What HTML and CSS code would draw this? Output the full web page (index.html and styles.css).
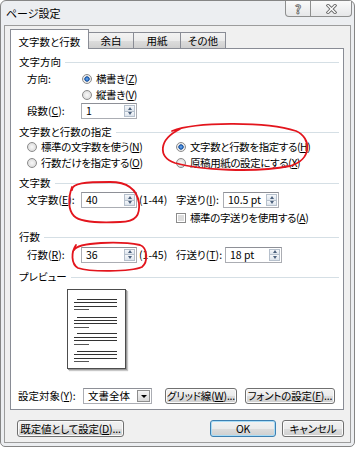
FILE: index.html
```html
<!DOCTYPE html>
<html lang="ja">
<head>
<meta charset="utf-8">
<title>ページ設定</title>
<link rel="stylesheet" href="styles.css">
</head>
<body>
<div class="window">
  <div class="titlebar">
    <span class="title">ページ設定</span>
    <div class="caps">
      <span class="cap help">?</span>
      <span class="cap close"><svg width="11" height="10" viewBox="0 0 11 10"><path d="M2 1.5 L9 8.5 M9 1.5 L2 8.5" stroke="#6b6b6b" stroke-width="3.2" stroke-linecap="square"/><path d="M2 1.5 L9 8.5 M9 1.5 L2 8.5" stroke="#ffffff" stroke-width="1.4" stroke-linecap="square"/></svg></span>
    </div>
  </div>
  <div class="client">
    <div class="tabs">
      <div class="tab active t1">文字数と行数</div>
      <div class="tab t2">余白</div>
      <div class="tab t3">用紙</div>
      <div class="tab t4">その他</div>
    </div>
    <div class="panel">
      <div class="grp g1">文字方向</div>
      <div class="row r-dir1"><span class="lbl l-dir">方向:</span><span class="radio on"></span><span class="rt">横書き(<u>Z</u>)</span></div>
      <div class="row r-dir2"><span class="radio"></span><span class="rt">縦書き(<u>V</u>)</span></div>
      <div class="row r-cols"><span class="lbl l54">段数(<u>C</u>):</span><span class="spin w56"><span class="val">1</span><span class="arrows"><span class="up"></span><span class="dn"></span></span></span></div>

      <div class="grp g2">文字数と行数の指定</div>
      <div class="row two r-opt">
        <div class="cell"><span class="radio"></span><span class="rt">標準の文字数を使う(<u>N</u>)</span></div>
        <div class="cell"><span class="radio on"></span><span class="rt">文字数と行数を指定する(<u>H</u>)</span></div>
      </div>
      <div class="row two r-opt">
        <div class="cell"><span class="radio"></span><span class="rt">行数だけを指定する(<u>O</u>)</span></div>
        <div class="cell"><span class="radio"></span><span class="rt">原稿用紙の設定にする(<u>X</u>)</span></div>
      </div>

      <div class="grp g3">文字数</div>
      <div class="row two r-chars">
        <div class="cell"><span class="lbl l54">文字数(<u>E</u>):</span><span class="spin w56"><span class="val">40</span><span class="arrows"><span class="up"></span><span class="dn"></span></span></span><span class="range">(1-44)</span></div>
        <div class="cell"><span class="lbl l47">字送り(<u>I</u>):</span><span class="spin w56"><span class="val">10.5 pt</span><span class="arrows"><span class="up"></span><span class="dn"></span></span></span></div>
      </div>
      <div class="row two r-check">
        <div class="cell"></div>
        <div class="cell"><span class="check"></span><span class="rt">標準の字送りを使用する(<u>A</u>)</span></div>
      </div>

      <div class="grp g4">行数</div>
      <div class="row two r-lines">
        <div class="cell"><span class="lbl l54">行数(<u>R</u>):</span><span class="spin w56"><span class="val">36</span><span class="arrows"><span class="up"></span><span class="dn"></span></span></span><span class="range">(1-45)</span></div>
        <div class="cell"><span class="lbl l49">行送り(<u>T</u>):</span><span class="spin w57"><span class="val">18 pt</span><span class="arrows"><span class="up"></span><span class="dn"></span></span></span></div>
      </div>

      <div class="grp g5">プレビュー</div>
      <div class="preview">
        <svg width="57" height="78" viewBox="0 0 57 78">
          <g stroke-width="1">
            <path d="M9 9.5H49M6 12.5H49M6 16.5H49" stroke="#333"/><path d="M6 19.5H21" stroke="#555"/>
            <path d="M9 27.5H49M6 30.5H49M6 33.5H49" stroke="#333"/><path d="M6 37.5H21" stroke="#555"/>
            <path d="M9 43.5H49M6 47.5H49M6 50.5H49" stroke="#333"/><path d="M6 54.5H21" stroke="#555"/>
            <path d="M9 61.5H49M6 64.5H49M6 68.5H49" stroke="#333"/><path d="M6 71.5H21" stroke="#555"/>
          </g>
        </svg>
      </div>

      <div class="row r-apply">
        <span class="lbl l65">設定対象(<u>Y</u>):</span>
        <span class="combo"><span class="val">文書全体</span><span class="drop"></span></span>
        <span class="btn b-grid">グリッド線(<u>W</u>)...</span>
        <span class="btn b-font">フォントの設定(<u>F</u>)...</span>
      </div>
    </div>
    <div class="footer">
      <span class="btn b-default">既定値として設定(<u>D</u>)...</span>
      <span class="btn def b-ok">OK</span>
      <span class="btn b-cancel">キャンセル</span>
    </div>
  </div>
</div>
<svg class="marks" width="357" height="450" viewBox="0 0 357 450">
  <g fill="none" stroke="#e3151d" stroke-width="1.8" stroke-linecap="round">
    <path d="M172 131 C195 122 265 121 296 131 C312 138 312 160 290 166 C255 173 200 170 175 163 C158 157 158 140 180 129"/>
    <path d="M72 190 C72 183 85 182 110 182 C128 182 137 190 139 203 C140 214 137 222 120 222 C100 223 80 222 74 216 C68 210 68 198 72 187"/>
    <path d="M74 250 C78 242 120 241 140 245 C148 248 148 262 142 267 C130 272 90 272 78 268 C71 264 71 252 76 245"/>
  </g>
</svg>
</body>
</html>
```
FILE: styles.css
```css
* { box-sizing: border-box; }
html, body { margin: 0; padding: 0; }
body {
  position: relative;
  width: 357px;
  height: 450px;
  overflow: hidden;
  background: #ffffff;
  font-family: "Noto Sans CJK JP", sans-serif;
  font-size: 10.5px;
  font-feature-settings: "palt" 1;
  color: #000;
}
u { text-decoration: underline; text-underline-offset: 1px; }

.window {
  width: 355px;
  height: 447px;
  border: 1px solid #858585;
  border-radius: 6px 6px 5px 5px;
  background: #eceef1;
  display: flex;
  flex-direction: column;
  padding: 0 3px 3px 3px;
}
.titlebar {
  height: 24px;
  flex: none;
  display: flex;
  justify-content: space-between;
  align-items: flex-start;
}
.title {
  padding-left: 2px;
  line-height: 24px;
  font-size: 11px;
}
.caps {
  display: flex;
  height: 16px;
  margin-right: -1px;
  border: 1px solid #8e8f8f;
  border-top: none;
  border-radius: 0 0 4px 4px;
  background: linear-gradient(#fafafa, #e6e7e9);
}
.cap {
  display: flex;
  align-items: center;
  justify-content: center;
}
.help {
  width: 24px;
  font-size: 12px;
  font-weight: bold;
  color: #fff;
  -webkit-text-stroke: 0.8px #666;
  line-height: 15px;
}
.close {
  width: 41px;
  border-left: 1px solid #8e8f8f;
}

.client {
  flex: 1;
  border: 1px solid #9c9c9c;
  background: #f0f0f0;
  padding: 3px 0 0 5px;
  display: flex;
  flex-direction: column;
}

.tabs {
  display: flex;
  align-items: flex-end;
  height: 20px;
  margin-bottom: -1px;
  position: relative;
  z-index: 1;
}
.tab {
  height: 16px;
  margin-bottom: 1px;
  border: 1px solid #898c95;
  border-bottom: none;
  padding-top: 1px;
  line-height: 14px;
  text-align: center;
  background: linear-gradient(#f3f3f3 0%, #ebebeb 50%, #dddddd 51%, #cfcfcf 100%);
}
.tab + .tab { margin-left: -1px; }
.tab.active {
  height: 20px;
  margin-bottom: 0;
  padding-top: 5px;
  background: #ffffff;
  position: relative;
  z-index: 2;
}
.t1 { width: 79px; }
.t2 { width: 46px; }
.t3 { width: 48px; }
.t4 { width: 46px; }

.panel {
  width: 334px;
  border: 1px solid #898c95;
  background: #ffffff;
  padding: 6px 0 5px 0;
}

.grp {
  display: flex;
  align-items: center;
  height: 14px;
  line-height: 14px;
  padding-left: 8px;
}
.grp::after {
  content: "";
  flex: 1;
  height: 1px;
  background: #d5dfe5;
  margin: 1px 4px 0 4px;
}
.g2, .g3, .g5 { margin-top: 5px; }
.g4 { margin-top: 4px; }

.row {
  display: flex;
  align-items: center;
  padding-left: 16px;
  line-height: 14px;
}
.two {
  display: grid;
  grid-template-columns: 149px auto;
  align-items: center;
}
.cell {
  display: flex;
  align-items: center;
}
.r-dir1 { height: 16px; margin-top: 2px; }
.r-dir2 { height: 15px; padding-left: 71px; }
.r-cols { height: 18px; }
.r-opt { height: 16px; }
.r-chars { height: 20px; }
.r-check { height: 16px; }
.r-lines { height: 21px; }

.lbl { flex: none; white-space: nowrap; }
.l-dir { width: 55px; }
.l54 { width: 54px; }
.l47 { width: 47px; }
.l49 { width: 49px; }
.l65 { width: 65px; }
.rt { margin-left: 4px; white-space: nowrap; letter-spacing: -0.4px; }
.range { margin-left: 2px; }

.radio {
  flex: none;
  width: 10px;
  height: 10px;
  border-radius: 50%;
  border: 1px solid #8b8b8b;
  background: radial-gradient(circle, #f9f9f9 0%, #e4e4e4 55%, #cfcfcf 100%);
}
.radio.on {
  background: radial-gradient(circle, #7fb6ef 0%, #2c6fc4 28%, #1a4f96 42%, #e6e6e6 52%, #f6f6f6 100%);
}
.check {
  flex: none;
  width: 10px;
  height: 10px;
  border: 1px solid #8b8b8b;
  padding: 1px;
  background: #fff;
  box-shadow: inset 0 0 0 1px #fff, inset 0 0 0 4px #dcdcdc;
}

.spin {
  display: flex;
  height: 16px;
  border: 1px solid #abadb3;
  border-top-color: #8e9097;
  background: #fff;
}
.w56 { width: 56px; }
.w57 { width: 57px; }
.spin .val, .combo .val {
  flex: 1;
  padding-left: 4px;
  line-height: 14px;
  white-space: nowrap;
}
.arrows {
  width: 12px;
  display: flex;
  flex-direction: column;
  padding: 1px 1px 1px 0;
}
.arrows span {
  flex: 1;
  border: 1px solid #b6c0cc;
  background: linear-gradient(#f6f8fb, #dde4ec);
  display: flex;
  align-items: center;
  justify-content: center;
}
.arrows .dn { margin-top: -1px; }
.arrows span::before {
  content: "";
  border-left: 2.5px solid transparent;
  border-right: 2.5px solid transparent;
}
.arrows .up::before { border-bottom: 3px solid #4b607c; }
.arrows .dn::before { border-top: 3px solid #4b607c; }

.preview {
  width: 59px;
  height: 80px;
  margin: 5px 0 0 56px;
  border: 1px solid #4d4d4d;
  background: #fff;
  box-shadow: 1px 1px 0 #9a9a9a, 2px 2px 1px #c8c8c8;
}
.preview svg { display: block; }

.r-apply {
  height: 16px;
  margin-top: 19px;
  padding-left: 7px;
}
.combo {
  display: flex;
  width: 69px;
  height: 16px;
  border: 1px solid #abadb3;
  border-top-color: #8e9097;
  background: #fff;
}
.drop {
  width: 13px;
  margin: 1px;
  border: 1px solid #8d8d8d;
  background: linear-gradient(#f5f5f5, #d9d9d9);
  display: flex;
  align-items: center;
  justify-content: center;
}
.drop::before {
  content: "";
  border-left: 3px solid transparent;
  border-right: 3px solid transparent;
  border-top: 3px solid #000;
}

.btn {
  display: flex;
  align-items: center;
  justify-content: center;
  height: 16px;
  border: 1px solid #707070;
  border-radius: 3px;
  background: linear-gradient(#f2f2f2 0%, #ebebeb 50%, #dddddd 51%, #cfcfcf 100%);
  box-shadow: inset 0 0 0 1px #fbfbfb;
  white-space: nowrap;
  line-height: 14px;
  letter-spacing: -0.2px;
}
.b-grid { width: 72px; margin-left: 13px; }
.b-font { width: 90px; margin-left: 8px; }

.footer {
  display: flex;
  margin-top: 10px;
  padding-left: 7px;
  padding-right: 6px;
}
.footer .btn { height: 17px; }
.b-default { width: 107px; }
.b-ok { width: 66px; margin-left: auto; }
.b-cancel { width: 62px; margin-left: 6px; }
.btn.def {
  border-color: #3c7fb1;
  box-shadow: inset 0 0 0 1px #a9dcf6;
}

.marks {
  position: absolute;
  left: 0;
  top: 0;
  pointer-events: none;
}
```
